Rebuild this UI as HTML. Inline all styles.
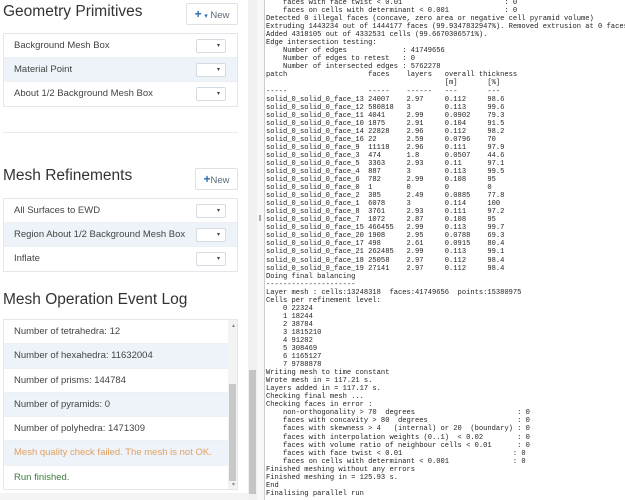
<!DOCTYPE html>
<html><head><meta charset="utf-8"><style>
*{margin:0;padding:0;box-sizing:border-box}
body{width:625px;height:500px;overflow:hidden;background:#fff;font-family:"Liberation Sans",sans-serif;position:relative}
.abs{position:absolute}
h2{position:absolute;font-weight:normal;font-size:15.5px;color:#333;left:3px}
.btn{position:absolute;border:1px solid #dde2e8;border-radius:2px;background:#fff;font-size:9.5px;color:#5a6a7a;text-align:center;line-height:20px}
.btn b{color:#2a6db0;font-size:12px}
.list{position:absolute;left:3px;width:235px;border:1px solid #e3e7ec}
.row{height:24px;line-height:24px;font-size:9.5px;color:#444;padding-left:10px;position:relative;border-bottom:1px solid #edf0f3}
.row.alt{background:#eef3f9}
.dd{position:absolute;right:11px;top:5px;width:30px;height:14px;border:1px solid #d6dbe0;border-radius:2px;background:#fff;font-size:6px;line-height:12px;text-align:right;padding-right:5px;color:#444}
.log .row{height:24.3px;line-height:24px;padding-left:10px}
pre{position:absolute;left:266px;top:-1px;font-family:"Liberation Mono",monospace;font-size:7.1px;line-height:8.05px;color:#222;white-space:pre}
</style></head><body>
<h2 style="top:3px">Geometry Primitives</h2>
<div class="btn" style="left:186px;top:3px;width:52px;height:22px"><b>+</b> <span style="color:#2a6db0;font-size:7px">▾</span> New</div>
<div class="list" style="top:33px;height:74px">
<div class="row">Background Mesh Box<div class="dd">▾</div></div>
<div class="row alt">Material Point<div class="dd">▾</div></div>
<div class="row" style="border:none">About 1/2 Background Mesh Box<div class="dd">▾</div></div>
</div>
<div class="abs" style="left:3px;top:132px;width:235px;height:1px;background:#e8ebee"></div>
<h2 style="top:167px">Mesh Refinements</h2>
<div class="btn" style="left:195px;top:168px;width:43px;height:22px"><b>+</b>New</div>
<div class="list" style="top:198px;height:74px">
<div class="row">All Surfaces to EWD<div class="dd">▾</div></div>
<div class="row alt">Region About 1/2 Background Mesh Box<div class="dd">▾</div></div>
<div class="row" style="border:none">Inflate<div class="dd">▾</div></div>
</div>
<h2 style="top:291px">Mesh Operation Event Log</h2>
<div class="list log" style="top:319px;height:171px;overflow:hidden">
<div class="row">Number of tetrahedra: 12</div>
<div class="row alt">Number of hexahedra: 11632004</div>
<div class="row">Number of prisms: 144784</div>
<div class="row alt">Number of pyramids: 0</div>
<div class="row">Number of polyhedra: 1471309</div>
<div class="row alt" style="color:#e0a060">Mesh quality check failed. The mesh is not OK.</div>
<div class="row" style="color:#3f7a3f;border:none">Run finished.</div>
<div class="abs" style="right:0;top:0;width:9px;height:171px;background:#f3f3f3"></div>
<div class="abs" style="right:1px;top:64px;width:7px;height:97px;background:#c8c8c8"></div>
<div class="abs" style="right:2px;top:2px;font-size:6px;color:#888">▴</div>
<div class="abs" style="right:2px;bottom:1px;font-size:6px;color:#888">▾</div>
</div>
<div class="abs" style="left:0;top:493px;width:248px;height:7px;background:#f4f4f4"></div>
<div class="abs" style="left:248px;top:0;width:9px;height:500px;background:#f0f0f0"></div>
<div class="abs" style="left:249px;top:370px;width:7px;height:124px;background:#c4c4c4"></div>
<div class="abs" style="left:257px;top:0;width:7px;height:500px;background:#f7f7f7"></div>
<div class="abs" style="left:259px;top:215px;width:2px;height:6px;background:#aaa"></div>
<div class="abs" style="left:264px;top:0;width:1px;height:500px;background:#ccc"></div>
<pre>    faces with face twist &lt; 0.01                        : 0
    faces on cells with determinant &lt; 0.001             : 0
Detected 0 illegal faces (concave, zero area or negative cell pyramid volume)
Extruding 1443234 out of 1444177 faces (99.9347832947%). Removed extrusion at 0 faces.
Added 4318105 out of 4332531 cells (99.6670306571%).
Edge intersection testing:
    Number of edges             : 41749656
    Number of edges to retest   : 0
    Number of intersected edges : 5762278
patch                   faces    layers   overall thickness
                                          [m]       [%]
-----                   -----    ------   ---       ---
solid_0_solid_0_face_13 24007    2.97     0.112     98.6
solid_0_solid_0_face_12 580818   3        0.113     99.6
solid_0_solid_0_face_11 4041     2.99     0.0902    79.3
solid_0_solid_0_face_10 1875     2.91     0.104     91.5
solid_0_solid_0_face_14 22828    2.96     0.112     98.2
solid_0_solid_0_face_16 22       2.59     0.0796    70
solid_0_solid_0_face_9  11118    2.96     0.111     97.9
solid_0_solid_0_face_3  474      1.8      0.0507    44.6
solid_0_solid_0_face_5  3363     2.93     0.11      97.1
solid_0_solid_0_face_4  887      3        0.113     99.5
solid_0_solid_0_face_6  782      2.99     0.108     95
solid_0_solid_0_face_0  1        0        0         0
solid_0_solid_0_face_2  385      2.49     0.0885    77.8
solid_0_solid_0_face_1  6078     3        0.114     100
solid_0_solid_0_face_8  3761     2.93     0.111     97.2
solid_0_solid_0_face_7  1072     2.87     0.108     95
solid_0_solid_0_face_15 466455   2.99     0.113     99.7
solid_0_solid_0_face_20 1908     2.95     0.0788    69.3
solid_0_solid_0_face_17 498      2.61     0.0915    80.4
solid_0_solid_0_face_21 262485   2.99     0.113     99.1
solid_0_solid_0_face_18 25058    2.97     0.112     98.4
solid_0_solid_0_face_19 27141    2.97     0.112     98.4
Doing final balancing
---------------------
Layer mesh : cells:13248318  faces:41749656  points:15380975
Cells per refinement level:
    0 22324
    1 18244
    2 38784
    3 1815210
    4 91282
    5 308469
    6 1165127
    7 9788878
Writing mesh to time constant
Wrote mesh in = 117.21 s.
Layers added in = 117.17 s.
Checking final mesh ...
Checking faces in error :
    non-orthogonality &gt; 70  degrees                        : 0
    faces with concavity &gt; 80  degrees                     : 0
    faces with skewness &gt; 4   (internal) or 20  (boundary) : 0
    faces with interpolation weights (0..1)  &lt; 0.02        : 0
    faces with volume ratio of neighbour cells &lt; 0.01      : 0
    faces with face twist &lt; 0.01                          : 0
    faces on cells with determinant &lt; 0.001               : 0
Finished meshing without any errors
Finished meshing in = 125.93 s.
End
Finalising parallel run</pre>
</body></html>
